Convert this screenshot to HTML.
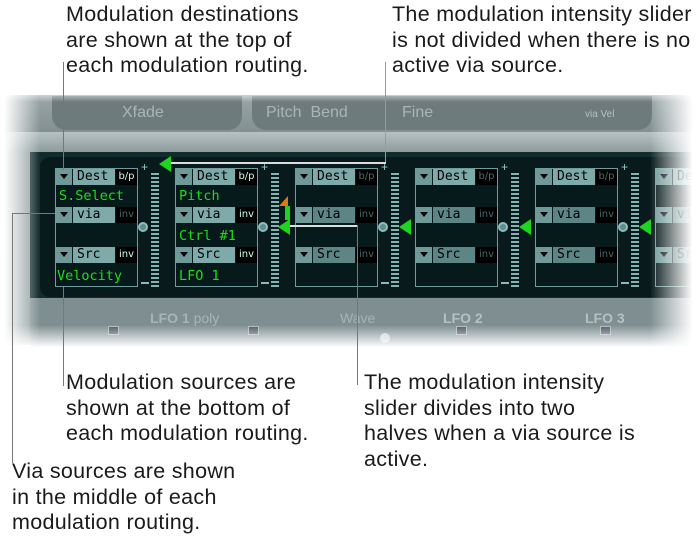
<!DOCTYPE html>
<html><head><meta charset="utf-8"><style>
*{margin:0;padding:0;box-sizing:border-box}
body{width:700px;height:542px;background:#fff;position:relative;overflow:hidden;font-family:"Liberation Sans",sans-serif}
.a{position:absolute}
.t{position:absolute;font-size:21.5px;letter-spacing:0.3px;line-height:25.5px;color:#1a1a1a;white-space:nowrap}
.ln{position:absolute;background:#777}
.box{position:absolute;top:168px;width:83px;height:119px;border:1px solid #6e9c9c;background:#06191b}
.row{position:absolute;left:0;width:81px;height:16px}
.tri{position:absolute;left:0;top:0;width:16px;height:16px;background:#6f9898}
.tri:after{content:"";position:absolute;left:4px;top:5px;border-left:4px solid transparent;border-right:4px solid transparent;border-top:5px solid #000}
.lab{position:absolute;left:17px;top:0;width:42px;height:16px;background:#7faaaa;color:#000;font-size:13px;line-height:16px;padding-left:4px;font-family:"DejaVu Sans Mono",monospace}
.lab.d{background:#5e8585}
.sm{position:absolute;left:60px;top:0;width:21px;height:16px;background:#000;color:#cfe;font-size:10px;line-height:16px;text-align:center;font-family:"DejaVu Sans",sans-serif}
.sm.g{color:#4a6a6a}
.val{position:absolute;left:3px;font-size:13.5px;color:#19e019;font-family:"DejaVu Sans Mono",monospace;line-height:16px}
.sl{position:absolute;top:173px;width:8px;height:114px;background:repeating-linear-gradient(#86b2b2 0 2px,transparent 2px 4px)}
.pl{position:absolute;top:160px;color:#9cc;font-size:12px}
.mi{position:absolute;top:282px;width:8px;height:2px;background:#8bb}
.kn{position:absolute;top:222px;width:10px;height:10px;border-radius:50%;background:#5d8d8d;border:2px solid #8fbcbc}
.gt{position:absolute;width:0;height:0;border-top:8px solid transparent;border-bottom:8px solid transparent;border-right:12px solid #1ed41e}
.tab{position:absolute;top:104px;color:#a9b5b6;font-size:16px}
</style></head><body>
<div class="a" style="left:0;top:95px;width:700px;height:250px;background:#8c9a9c"></div>
<div class="a" style="left:0;top:95px;width:700px;height:45px;background:linear-gradient(#9aa6a8,#7e8c8e)"></div>
<div class="a" style="left:52px;top:96px;width:190px;height:34px;border-radius:0 0 14px 14px;background:#6d7b7d"></div>
<div class="a" style="left:252px;top:96px;width:400px;height:34px;border-radius:0 0 14px 14px;background:#6d7b7d"></div>
<div class="tab" style="left:122px">Xfade</div>
<div class="tab" style="left:266px">Pitch&nbsp;&nbsp;Bend</div>
<div class="tab" style="left:402px">Fine</div>
<div class="a" style="left:585px;top:109px;color:#b5c0c1;font-size:10px">via Vel</div>
<div class="a" style="left:0;top:132px;width:700px;height:20px;background:linear-gradient(#b7c2c4,#8d9b9d)"></div>
<div class="a" style="left:30px;top:152px;width:670px;height:148px;background:#122c2e"></div>
<div class="a" style="left:40px;top:157px;width:660px;height:140px;background:#081a1c;border-radius:10px 0 0 10px"></div>
<div class="a" style="left:30px;top:298px;width:670px;height:50px;background:#7f8f91"></div>
<div class="a" style="left:150px;top:310px;color:#a8b4b5;font-size:14px;font-weight:bold">LFO 1 <span style="font-weight:normal">poly</span></div>
<div class="a" style="left:340px;top:310px;color:#a8b4b5;font-size:14px">Wave</div>
<div class="a" style="left:443px;top:310px;color:#b5c0c1;font-size:14px;font-weight:bold">LFO 2</div>
<div class="a" style="left:585px;top:310px;color:#b5c0c1;font-size:14px;font-weight:bold">LFO 3</div>
<div class="a" style="left:108px;top:326px;width:11px;height:9px;background:#556;border:1px solid #abb"></div>
<div class="a" style="left:248px;top:326px;width:11px;height:9px;background:#556;border:1px solid #abb"></div>
<div class="a" style="left:456px;top:326px;width:11px;height:9px;background:#556;border:1px solid #abb"></div>
<div class="a" style="left:600px;top:326px;width:11px;height:9px;background:#556;border:1px solid #abb"></div>
<div class="a" style="left:380px;top:333px;width:10px;height:10px;border-radius:50%;background:#ccd"></div>

<div class="box" style="left:55px">
 <div class="row" style="top:0"><div class="tri"></div><div class="lab">Dest</div><div class="sm">b/p</div></div>
 <div class="val" style="top:19px">S.Select</div>
 <div class="row" style="top:38px"><div class="tri"></div><div class="lab">via</div><div class="sm g">inv</div></div>
 <div class="row" style="top:78px"><div class="tri"></div><div class="lab">Src</div><div class="sm">inv</div></div>
 <div class="val" style="top:99px;left:1px">Velocity</div>
</div>
<div class="box" style="left:175px">
 <div class="row" style="top:0"><div class="tri"></div><div class="lab">Dest</div><div class="sm">b/p</div></div>
 <div class="val" style="top:19px">Pitch</div>
 <div class="row" style="top:38px"><div class="tri"></div><div class="lab">via</div><div class="sm">inv</div></div>
 <div class="val" style="top:59px">Ctrl #1</div>
 <div class="row" style="top:78px"><div class="tri"></div><div class="lab">Src</div><div class="sm">inv</div></div>
 <div class="val" style="top:99px">LFO 1</div>
</div>
<div class="box" style="left:295px">
 <div class="row" style="top:0"><div class="tri"></div><div class="lab">Dest</div><div class="sm g">b/p</div></div>
 <div class="row" style="top:38px"><div class="tri"></div><div class="lab d">via</div><div class="sm g">inv</div></div>
 <div class="row" style="top:78px"><div class="tri"></div><div class="lab d">Src</div><div class="sm g">inv</div></div>
</div>
<div class="box" style="left:415px">
 <div class="row" style="top:0"><div class="tri"></div><div class="lab">Dest</div><div class="sm g">b/p</div></div>
 <div class="row" style="top:38px"><div class="tri"></div><div class="lab d">via</div><div class="sm g">inv</div></div>
 <div class="row" style="top:78px"><div class="tri"></div><div class="lab d">Src</div><div class="sm g">inv</div></div>
</div>
<div class="box" style="left:535px">
 <div class="row" style="top:0"><div class="tri"></div><div class="lab">Dest</div><div class="sm g">b/p</div></div>
 <div class="row" style="top:38px"><div class="tri"></div><div class="lab d">via</div><div class="sm g">inv</div></div>
 <div class="row" style="top:78px"><div class="tri"></div><div class="lab d">Src</div><div class="sm g">inv</div></div>
</div>
<div class="box" style="left:655px">
 <div class="row" style="top:0"><div class="tri"></div><div class="lab">Dest</div><div class="sm g">b/p</div></div>
 <div class="row" style="top:38px"><div class="tri"></div><div class="lab d">via</div><div class="sm g">inv</div></div>
 <div class="row" style="top:78px"><div class="tri"></div><div class="lab d">Src</div><div class="sm g">inv</div></div>
</div>

<div class="sl" style="left:151px"></div><div class="pl" style="left:141px">+</div><div class="mi" style="left:141px"></div><div class="kn" style="left:138px"></div>
<div class="sl" style="left:271px"></div><div class="pl" style="left:261px">+</div><div class="mi" style="left:261px"></div><div class="kn" style="left:258px"></div>
<div class="sl" style="left:391px"></div><div class="pl" style="left:381px">+</div><div class="mi" style="left:381px"></div><div class="kn" style="left:378px"></div>
<div class="sl" style="left:511px"></div><div class="pl" style="left:501px">+</div><div class="mi" style="left:501px"></div><div class="kn" style="left:498px"></div>
<div class="sl" style="left:631px"></div><div class="pl" style="left:621px">+</div><div class="mi" style="left:621px"></div><div class="kn" style="left:618px"></div>
<div class="gt" style="left:159px;top:156px"></div>
<div class="a" style="left:279px;top:196px;width:0;height:0;border-left:9px solid transparent;border-bottom:10px solid #e07a10"></div>
<div class="a" style="left:285px;top:206px;width:5px;height:14px;background:#1ed41e"></div>
<div class="gt" style="left:278px;top:219px"></div>
<div class="gt" style="left:399px;top:219px"></div>
<div class="gt" style="left:519px;top:219px"></div>
<div class="gt" style="left:639px;top:219px"></div>

<div class="a" style="left:0;top:90px;width:40px;height:260px;background:linear-gradient(90deg,#fff 10%,rgba(255,255,255,0))"></div>
<div class="a" style="left:650px;top:90px;width:50px;height:260px;background:linear-gradient(90deg,rgba(255,255,255,0),#fff 85%)"></div>
<div class="a" style="left:0;top:325px;width:700px;height:25px;background:linear-gradient(rgba(255,255,255,0),#fff 90%)"></div>
<div class="a" style="left:0;top:88px;width:700px;height:14px;background:linear-gradient(#fff,rgba(255,255,255,0))"></div>

<div class="ln" style="left:63px;top:62px;width:1px;height:108px"></div>
<div class="ln" style="left:385px;top:62px;width:1px;height:101px;background:#999"></div>
<div class="ln" style="left:171px;top:162px;width:215px;height:2px;background:#ddd"></div>
<div class="ln" style="left:12px;top:213px;width:1px;height:250px"></div>
<div class="ln" style="left:12px;top:213px;width:43px;height:1px"></div>
<div class="ln" style="left:63px;top:287px;width:1px;height:99px"></div>
<div class="ln" style="left:290px;top:225px;width:67px;height:2px;background:#ddd"></div>
<div class="ln" style="left:357px;top:225px;width:1px;height:160px"></div>

<div class="t" style="left:66px;top:2px">Modulation destinations<br>are shown at the top of<br>each modulation routing.</div>
<div class="t" style="left:392px;top:2px">The modulation intensity slider<br>is not divided when there is no<br>active via source.</div>
<div class="t" style="left:66px;top:370px">Modulation sources are<br>shown at the bottom of<br>each modulation routing.</div>
<div class="t" style="left:364px;top:370px">The modulation intensity<br>slider divides into two<br>halves when a via source is<br>active.</div>
<div class="t" style="left:12px;top:459px">Via sources are shown<br>in the middle of each<br>modulation routing.</div>
</body></html>
